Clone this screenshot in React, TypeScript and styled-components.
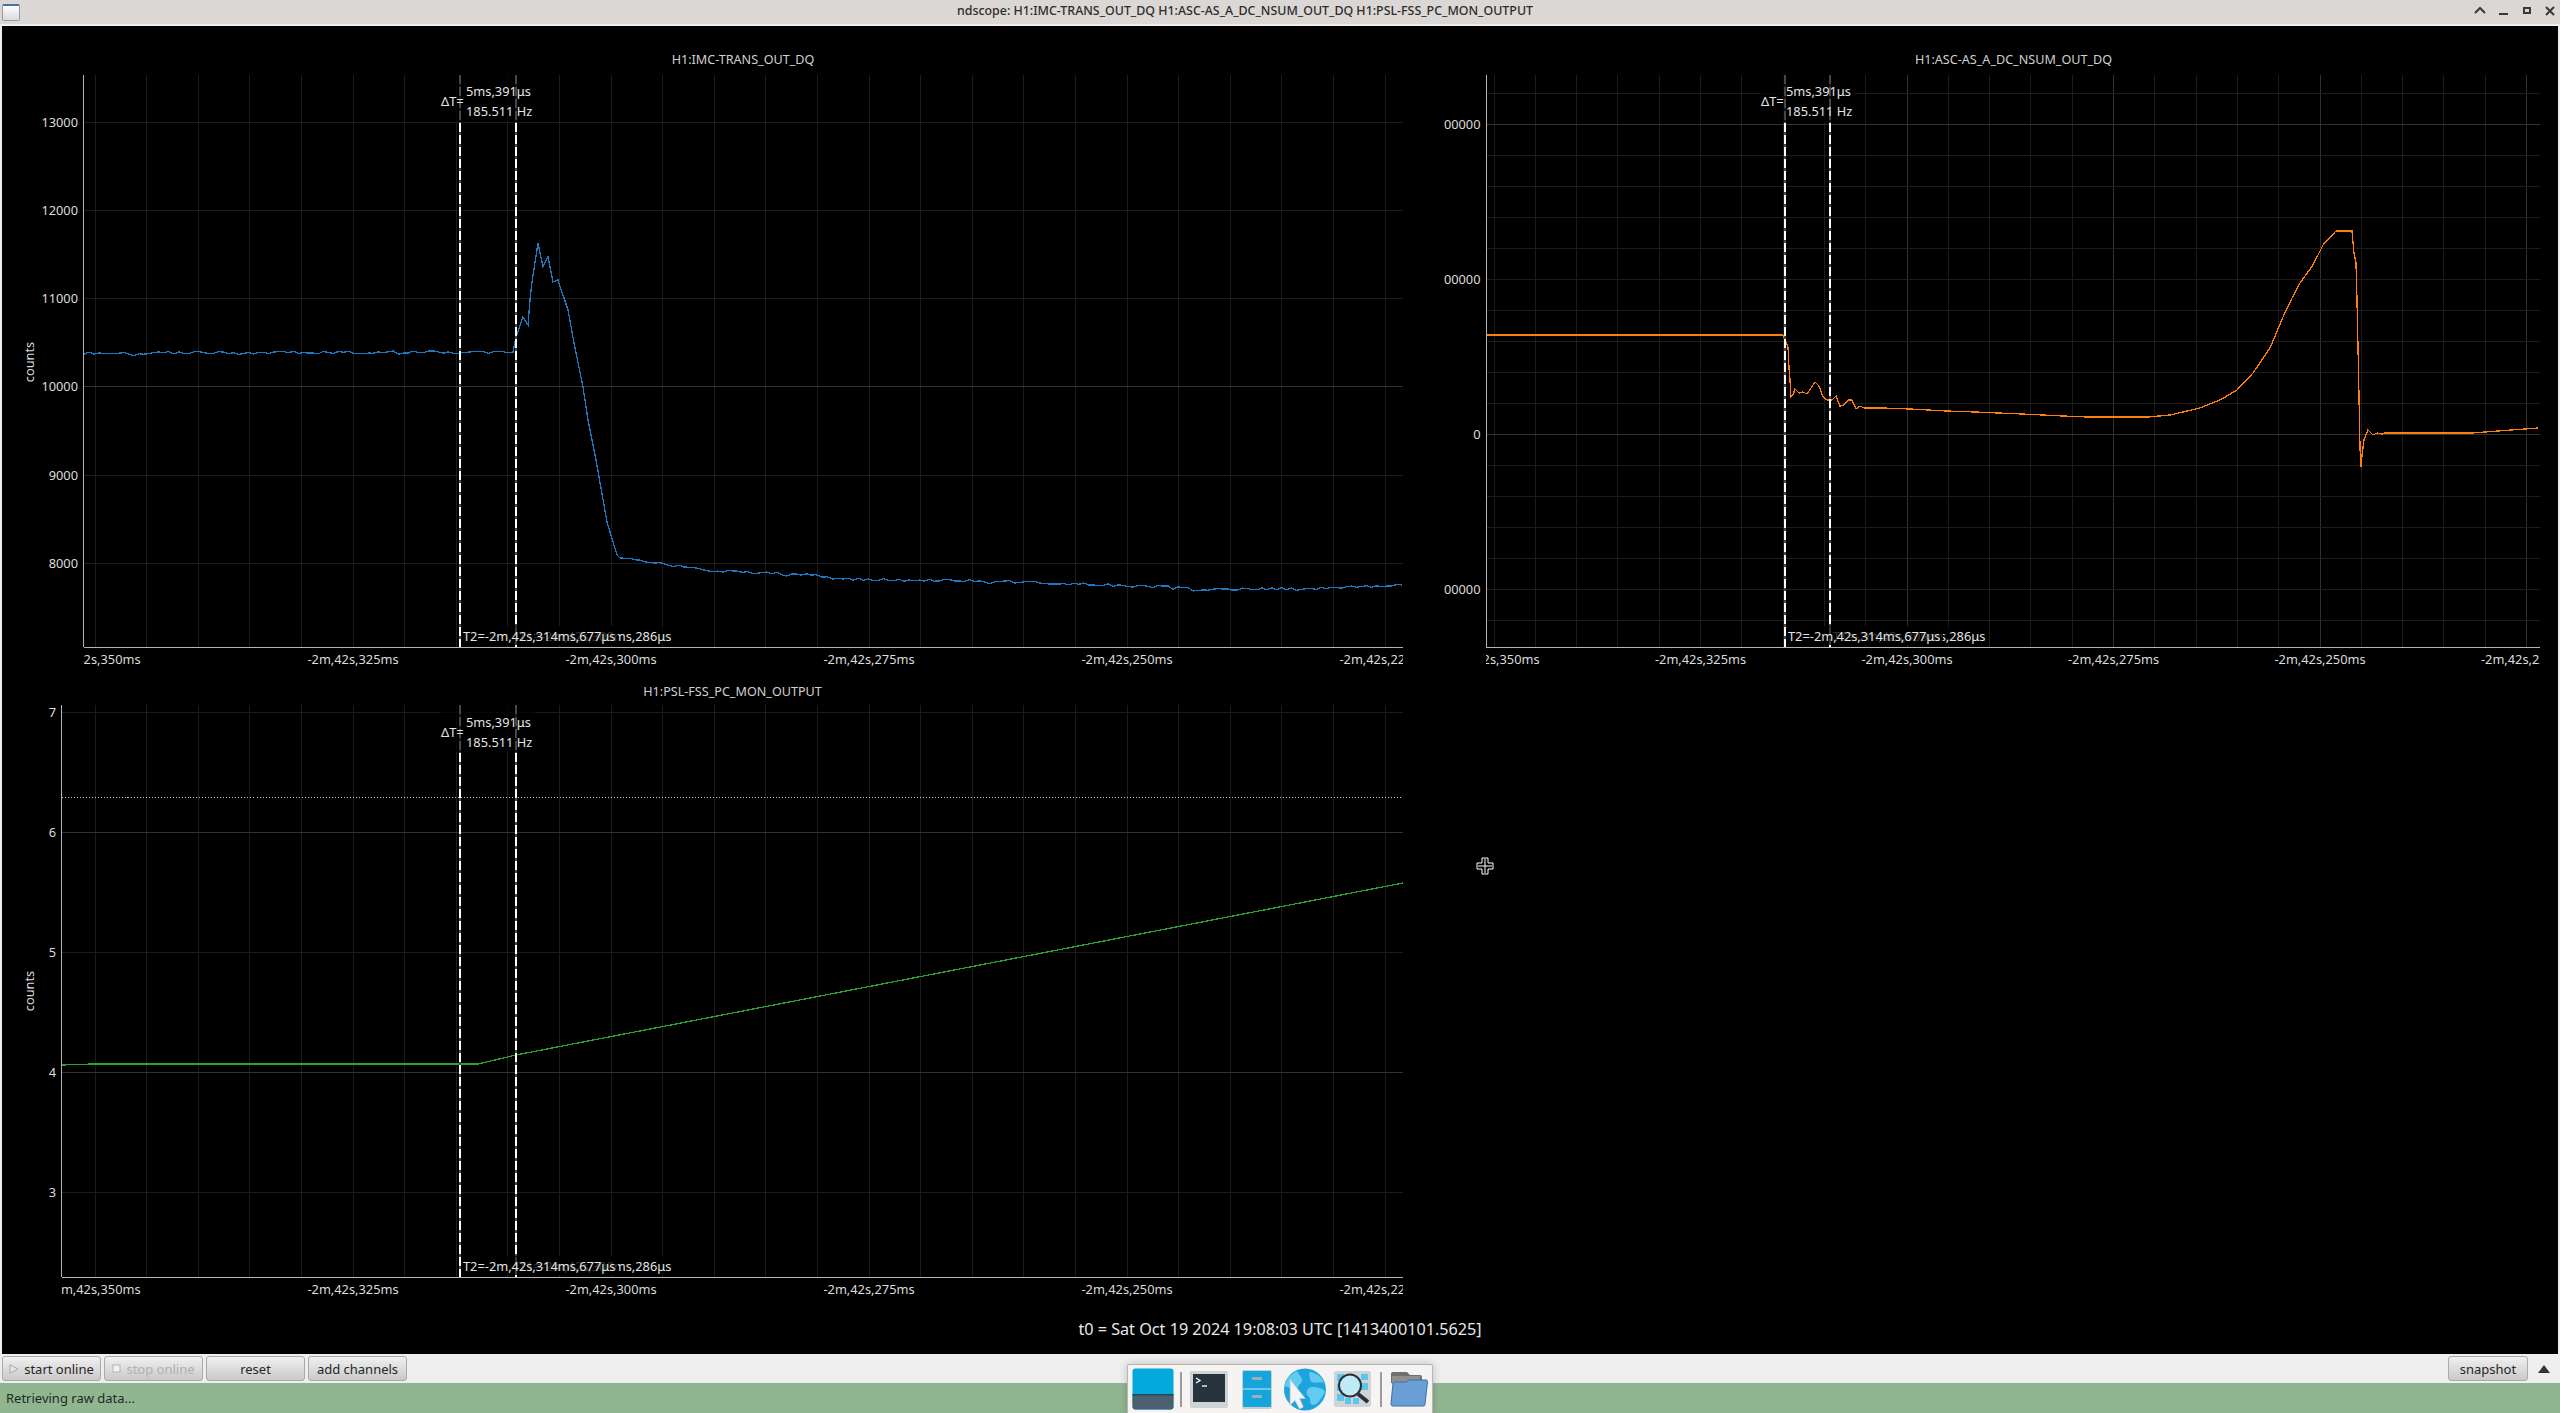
import React from 'react';
import styled, { createGlobalStyle } from 'styled-components';

const FONT = '"Noto Sans", "Open Sans", "DejaVu Sans", sans-serif';

const Global = createGlobalStyle`
  html, body { margin: 0; padding: 0; background: #eeeeee; }
  body { font-family: ${FONT}; }
`;

const Win = styled.div`
  position: relative;
  width: 2560px;
  height: 1413px;
  overflow: hidden;
  display: flex;
  flex-direction: column;
  background: #eeeeee;
`;

const TitleBar = styled.header`
  height: 24px;
  display: flex;
  align-items: center;
  background: #dad7d4;
  flex: none;
`;
const WinIcon = styled.div`
  width: 18px;
  height: 17px;
  margin-left: 2px;
  border: 1px solid #9a9a9a;
  border-top: 2px solid #4a6ea8;
  border-radius: 2px;
  box-sizing: border-box;
  background: linear-gradient(#fdfdfd, #d8dcdc);
`;
const WinTitle = styled.div`
  flex: 1;
  text-align: center;
  font-size: 12.4px;
  color: #2c2c2c;
  font-weight: 500;
  padding-bottom: 3px;
`;
const WinControls = styled.svg`
  width: 90px;
  height: 24px;
  flex: none;
`;

const Screen = styled.main`
  flex: none;
  height: 1328px;
  margin: 2px 2px 0;
  background: #000;
  display: flex;
  flex-direction: column;
`;
const PlotGrid = styled.div`
  display: grid;
  grid-template-columns: 1442px 1114px;
  grid-template-rows: 644px 630px;
`;
const Cell = styled.section`
  display: flex;
  flex-direction: column;
`;
const PlotTitle = styled.div<{ $h: number; $pad: number; $l: number; $r: number }>`
  height: ${(p) => p.$h}px;
  box-sizing: border-box;
  padding: ${(p) => p.$pad}px ${(p) => p.$r}px 0 ${(p) => p.$l}px;
  line-height: 20px;
  text-align: center;
  font-size: 12.6px;
  color: #d0d0d0;
`;
const ChartSvg = styled.svg`
  display: block;
  flex: none;
`;
const Tick = styled.text`
  font-family: ${FONT};
  font-size: 12.8px;
  fill: #dcdcdc;
`;
const CursorText = styled.text`
  font-family: ${FONT};
  font-size: 12.8px;
  fill: #e4e4e4;
`;
const Footer = styled.div`
  height: 54px;
  box-sizing: border-box;
  padding-top: 4px;
  display: flex;
  align-items: center;
  justify-content: center;
  font-size: 16.2px;
  color: #e8e8e8;
`;

const Toolbar = styled.div`
  height: 29px;
  flex: none;
  display: flex;
  align-items: center;
  gap: 3px;
  padding: 0 2px;
  background: #eeeeee;
`;
const Button = styled.button<{ $w?: number }>`
  width: ${(p) => p.$w ?? 99}px;
  height: 25px;
  padding: 0;
  display: flex;
  align-items: center;
  justify-content: center;
  gap: 5px;
  box-sizing: border-box;
  border: 1px solid #aaaaaa;
  border-radius: 3px;
  background: linear-gradient(#f0f0f0, #c9c9c9);
  font-family: ${FONT};
  font-size: 13px;
  color: ${(p) => (p.disabled ? '#b0b0b0' : '#262626')};
`;
const ToolSpacer = styled.div`
  flex: 1;
`;
const MoreArrow = styled.svg`
  width: 12px;
  height: 8px;
  margin: 0 8px 0 7px;
`;
const StatusBar = styled.footer`
  flex: 1;
  background: #90b690;
  display: flex;
  align-items: center;
  padding-left: 6px;
  font-size: 13px;
  color: #1f2a1f;
`;

const Dock = styled.nav`
  position: absolute;
  left: 1127px;
  top: 1364px;
  width: 306px;
  height: 52px;
  box-sizing: border-box;
  background: #f5f4f2;
  border: 1px solid #b7b5b0;
  border-radius: 2px;
  box-shadow: 0 0 8px rgba(0, 0, 0, 0.2);
  display: flex;
  align-items: flex-start;
  padding-left: 4px;
`;
const DockIcon = styled.svg<{ $ml: number; $mt: number }>`
  margin-left: ${(p) => p.$ml}px;
  margin-top: ${(p) => p.$mt}px;
  flex: none;
  display: block;
`;
const DockSep = styled.div<{ $ml: number }>`
  width: 2px;
  height: 35px;
  margin: 7px 0 0 ${(p) => p.$ml}px;
  background: #9b9b9b;
  flex: none;
`;
const MousePointer = styled.svg`
  position: absolute;
  left: 1476px;
  top: 857px;
  width: 18px;
  height: 18px;
`;

/* ---------- data ---------- */

type P = [number, number];

function rng(seed: number) {
  let s = seed;
  return () => {
    s = (s * 16807) % 2147483647;
    return (s % 10000) / 10000 - 0.5;
  };
}

function noisy(a: P[], step: number, amp: number, seed: number): string {
  const r = rng(seed);
  const out: string[] = [];
  for (let i = 0; i < a.length - 1; i++) {
    const [x0, y0] = a[i];
    const [x1, y1] = a[i + 1];
    const n = Math.max(1, Math.round((x1 - x0) / step));
    for (let k = 0; k < n; k++) {
      const t = k / n;
      let dy = r() * amp * 2;
      if (r() > 0.42) dy += 1.6 * Math.sign(amp);
      out.push(`${(x0 + (x1 - x0) * t).toFixed(1)},${(y0 + (y1 - y0) * t + dy).toFixed(1)}`);
    }
  }
  out.push(`${a[a.length - 1][0]},${a[a.length - 1][1]}`);
  return out.join(' ');
}

const exact = (a: P[]) => a.map((p) => p.join(',')).join(' ');

const trace1 =
  noisy([[84, 353], [513, 352]], 5, 1.4, 71) +
  ' ' +
  exact([
    [516, 337], [523, 317], [528, 325], [530, 300], [532, 282], [538, 243], [543, 267], [548, 257],
    [553, 282], [558, 280], [563, 295], [568, 310], [574, 343], [583, 387], [588, 420], [596, 460],
    [607, 522], [617, 555],
  ]) +
  ' ' +
  noisy([[620, 558], [718, 571], [816, 575], [833, 579], [980, 581], [1143, 586], [1208, 589], [1306, 589], [1402, 585]], 5, 1.3, 913);

const trace2 = exact([
  [1486, 335], [1783, 335], [1785, 340], [1788, 347], [1789, 368], [1790, 380], [1791, 397], [1793, 395],
  [1795, 389], [1799, 393], [1803, 392], [1807, 394], [1815, 382], [1819, 386], [1823, 397], [1827, 400],
  [1832, 400], [1836, 396], [1840, 406], [1844, 405], [1848, 400], [1852, 400], [1856, 409], [1860, 406],
  [1864, 408], [1883, 408], [1910, 409], [1947, 411], [1975, 412], [2022, 414], [2063, 416], [2087, 417],
  [2148, 417], [2170, 415], [2200, 408], [2220, 400], [2237, 390], [2253, 373], [2270, 348], [2283, 317],
  [2292, 298], [2300, 283], [2313, 265], [2323, 245], [2336, 231], [2352, 231], [2354, 253], [2356, 263],
  [2357, 300], [2358, 347], [2359, 397], [2360, 448], [2361, 467], [2362, 455], [2364, 440], [2368, 430],
  [2373, 435], [2377, 433], [2382, 434], [2385, 433], [2472, 433], [2498, 431], [2538, 428],
]);

const trace3 = exact([
  [62, 1065], [93, 1064], [478, 1064], [516, 1055], [1403, 883],
]);

interface PlotCfg {
  id: string;
  title: string;
  titleH: number;
  titlePad: number;
  titleL: number;
  titleR: number;
  originX: number;
  originY: number;
  width: number;
  height: number;
  axisX: number;
  right: number;
  top: number;
  bottom: number;
  yTicks: [number, string][];
  hGrid: number[];
  hStrong: number[];
  vStart: number;
  vStep: number;
  vStrong: boolean;
  xLabelStart: number;
  xLabelStep: number;
  cursors: [number, number];
  labelX: number;
  deltaX: number;
  labelOff: number;
  countsX: number;
  countsY: number;
  trace: string;
  color: string;
  dotted?: number;
}

const range = (a: number, step: number, b: number) => {
  const r: number[] = [];
  for (let v = a; v <= b; v += step) r.push(v);
  return r;
};

const plots: PlotCfg[] = [
  {
    id: 'a', title: 'H1:IMC-TRANS_OUT_DQ', titleH: 49, titlePad: 24, titleL: 81, titleR: 41,
    originX: 2, originY: 75, width: 1442, height: 595, axisX: 83.5, right: 1403, top: 75, bottom: 647,
    yTicks: [[122, '13000'], [210, '12000'], [298, '11000'], [386, '10000'], [475, '9000'], [563, '8000']],
    hGrid: [122, 210, 298, 386, 475, 563], hStrong: [386],
    vStart: 95, vStep: 51.6, vStrong: false, xLabelStart: 95, xLabelStep: 258,
    cursors: [460, 516], labelX: 466, deltaX: 441, labelOff: 16, countsX: 29, countsY: 362,
    trace: trace1, color: '#1f77c0',
  },
  {
    id: 'b', title: 'H1:ASC-AS_A_DC_NSUM_OUT_DQ', titleH: 49, titlePad: 24, titleL: 42, titleR: 17,
    originX: 1444, originY: 75, width: 1114, height: 595, axisX: 1486, right: 2540, top: 75, bottom: 647,
    yTicks: [[124, '200000'], [279, '100000'], [434, '0'], [589, '-100000']],
    hGrid: range(93, 31, 640), hStrong: [124, 434],
    vStart: 1494, vStep: 41.3, vStrong: true, xLabelStart: 1494, xLabelStep: 206.5,
    cursors: [1785, 1830], labelX: 1786, deltaX: 1761, labelOff: 16, countsX: 1419, countsY: 352,
    trace: trace2, color: '#ff7f0e',
  },
  {
    id: 'c', title: 'H1:PSL-FSS_PC_MON_OUTPUT', titleH: 35, titlePad: 12, titleL: 60, titleR: 41,
    originX: 2, originY: 705, width: 1442, height: 595, axisX: 61.5, right: 1403, top: 705, bottom: 1277,
    yTicks: [[712, '7'], [832, '6'], [952, '5'], [1072, '4'], [1192, '3']],
    hGrid: [712, 832, 952, 1072, 1192], hStrong: [832, 1072],
    vStart: 95, vStep: 51.6, vStrong: false, xLabelStart: 95, xLabelStep: 258,
    cursors: [460, 516], labelX: 466, deltaX: 441, labelOff: 17, countsX: 29, countsY: 991,
    trace: trace3, color: '#2ca02c', dotted: 797,
  },
];

const xLabels = ['-2m,42s,350ms', '-2m,42s,325ms', '-2m,42s,300ms', '-2m,42s,275ms', '-2m,42s,250ms', '-2m,42s,225ms'];

/* ---------- parts ---------- */

function Chart({ c }: { c: PlotCfg }) {
  const [c1, c2] = c.cursors;
  const vLines = range(c.vStart, c.vStep, c.right);
  return (
    <ChartSvg
      width={c.width}
      height={c.height}
      viewBox={`${c.originX} ${c.originY} ${c.width} ${c.height}`}
    >
      <defs>
        <clipPath id={`clip-${c.id}`}>
          <rect x={c.axisX} y={c.bottom} width={c.right - c.axisX} height={40} />
        </clipPath>
      </defs>
      {vLines.map((x, i) => (
        <line
          key={i}
          x1={x}
          x2={x}
          y1={c.top}
          y2={c.bottom}
          stroke={c.vStrong && i % 5 === 0 && i > 5 ? '#303030' : '#1c1c1c'}
          strokeWidth={1}
          shapeRendering="crispEdges"
        />
      ))}
      {c.hGrid.map((y) => (
        <line
          key={y}
          x1={c.axisX}
          x2={c.right}
          y1={y}
          y2={y}
          stroke={c.hStrong.includes(y) ? '#323232' : '#1c1c1c'}
          strokeWidth={1}
          shapeRendering="crispEdges"
        />
      ))}
      {c.dotted && (
        <line x1={c.axisX} x2={c.right} y1={c.dotted} y2={c.dotted} stroke="#c8c8c8" strokeWidth={1} strokeDasharray="1 2" shapeRendering="crispEdges" />
      )}
      <polyline points={c.trace} fill="none" stroke={c.color} strokeWidth={1.3} shapeRendering="crispEdges" />
      {[c1, c2].map((x) => (
        <g key={x}>
          <line x1={x} x2={x} y1={c.top} y2={c.bottom} stroke="#4a4a4a" strokeWidth={2} shapeRendering="crispEdges" />
          <line x1={x} x2={x} y1={c.top} y2={c.bottom} stroke="#ffffff" strokeWidth={2} strokeDasharray="9 3" shapeRendering="crispEdges" />
        </g>
      ))}
      {/* delta label */}
      <rect x={c.deltaX - 1} y={c.top} width={c.labelX + 70 - c.deltaX} height={47} fill="rgba(0,0,0,0.72)" />
      <CursorText x={c.deltaX} y={c.top + c.labelOff + 10} dominantBaseline="central">ΔT=</CursorText>
      <CursorText x={c.labelX} y={c.top + c.labelOff} dominantBaseline="central">5ms,391μs</CursorText>
      <CursorText x={c.labelX} y={c.top + c.labelOff + 20} dominantBaseline="central">185.511 Hz</CursorText>
      {/* time labels */}
      <rect x={c2 + 2} y={c.bottom - 21} width={156} height={19} fill="rgba(0,0,0,0.72)" />
      <CursorText x={c2 + 3} y={c.bottom - 11} dominantBaseline="central">T1=-2m,42s,309ms,286μs</CursorText>
      <rect x={c1 + 2} y={c.bottom - 21} width={156} height={19} fill="rgba(0,0,0,0.78)" />
      <CursorText x={c1 + 3} y={c.bottom - 11} dominantBaseline="central">T2=-2m,42s,314ms,677μs</CursorText>
      {/* axes */}
      <line x1={c.axisX} x2={c.axisX} y1={c.top} y2={c.bottom} stroke="#b4b4b4" shapeRendering="crispEdges" />
      <line x1={c.axisX} x2={c.right} y1={c.bottom} y2={c.bottom} stroke="#b4b4b4" shapeRendering="crispEdges" />
      {c.yTicks.map(([y, t]) => (
        <Tick key={t} x={c.axisX - 5.5} y={y} textAnchor="end" dominantBaseline="central">{t}</Tick>
      ))}
      <g clipPath={`url(#clip-${c.id})`}>
        {xLabels.map((t, i) => (
          <Tick key={t} x={c.xLabelStart + i * c.xLabelStep} y={c.bottom + 12} textAnchor="middle" dominantBaseline="central">{t}</Tick>
        ))}
      </g>
      <Tick
        x={c.countsX}
        y={c.countsY}
        textAnchor="middle"
        dominantBaseline="central"
        transform={`rotate(-90 ${c.countsX} ${c.countsY})`}
      >
        counts
      </Tick>
    </ChartSvg>
  );
}

function Plot({ c }: { c: PlotCfg }) {
  return (
    <Cell>
      <PlotTitle $h={c.titleH} $pad={c.titlePad} $l={c.titleL} $r={c.titleR}>{c.title}</PlotTitle>
      <Chart c={c} />
    </Cell>
  );
}

const Controls = () => (
  <WinControls viewBox="2470 0 90 24">
    <g fill="none" stroke="#333a40" strokeWidth={2}>
      <path d="M2475 13l5-5 5 5" />
      <path d="M2499 14h9" />
      <rect x={2524} y={8} width={6} height={5} />
      <path d="M2546 7l8 8M2554 7l-8 8" />
    </g>
  </WinControls>
);

export default function App() {
  return (
    <Win>
      <Global />
      <TitleBar>
        <WinIcon />
        <WinTitle>ndscope: H1:IMC-TRANS_OUT_DQ H1:ASC-AS_A_DC_NSUM_OUT_DQ H1:PSL-FSS_PC_MON_OUTPUT</WinTitle>
        <Controls />
      </TitleBar>
      <Screen>
        <PlotGrid>
          <Plot c={plots[0]} />
          <Plot c={plots[1]} />
          <Plot c={plots[2]} />
          <Cell />
        </PlotGrid>
        <Footer>t0 = Sat Oct 19 2024 19:08:03 UTC [1413400101.5625]</Footer>
      </Screen>
      <Toolbar>
        <Button>
          <svg width="10" height="10" viewBox="0 0 10 10">
            <path d="M1 .8L9 5 1 9.2z" fill="#e6e6e6" stroke="#a8a8a8" strokeWidth="1" />
          </svg>
          start online
        </Button>
        <Button disabled>
          <svg width="9" height="9" viewBox="0 0 9 9">
            <rect x="1" y="1" width="7" height="7" fill="#f2f2f2" stroke="#b4b4b4" />
          </svg>
          stop online
        </Button>
        <Button>reset</Button>
        <Button>add channels</Button>
        <ToolSpacer />
        <Button $w={80}>snapshot</Button>
        <MoreArrow viewBox="0 0 12 8">
          <path d="M6 0l6 8H0z" fill="#333333" />
        </MoreArrow>
      </Toolbar>
      <StatusBar>Retrieving raw data...</StatusBar>
      <Dock>
        <DockIcon $ml={0} $mt={3} width="42" height="42" viewBox="0 0 42 42">
          <rect x="0.5" y="0.5" width="41" height="41" rx="3" fill="#01a9dd" />
          <path d="M.5 27h41v11.500a3 3 0 0 1-3 3h-35a3 3 0 0 1-3-3z" fill="#4b6070" />
          <rect x="0.5" y="26" width="41" height="1.500" fill="#2a4555" />
        </DockIcon>
        <DockSep $ml={6} />
        <DockIcon $ml={8} $mt={6} width="38" height="37" viewBox="0 0 38 37">
          <rect x="0" y="0" width="38" height="37" rx="2" fill="#ced3d6" />
          <rect x="3" y="3" width="32" height="28" fill="#27343e" />
          <path d="M6 7l4 2.500-4 2.500" fill="none" stroke="#fff" strokeWidth="1.300" />
          <path d="M12 15h5" stroke="#fff" strokeWidth="1.300" />
        </DockIcon>
        <DockIcon $ml={14} $mt={5} width="30" height="39" viewBox="0 0 30 39">
          <rect x="0" y="0" width="30" height="39" rx="2" fill="#c8cdd0" />
          <rect x="1" y="1" width="28" height="36" rx="1" fill="#14a5dc" />
          <rect x="1" y="18.500" width="28" height="1" fill="#cfe8f2" />
          <rect x="10" y="7" width="10" height="3" rx="1" fill="#9bb0ba" />
          <rect x="10" y="25" width="10" height="3" rx="1" fill="#9bb0ba" />
        </DockIcon>
        <DockIcon $ml={11} $mt={3} width="44" height="43" viewBox="0 0 44 43">
          <circle cx="22" cy="21.500" r="21" fill="#1fa3dc" />
          <path d="M14 3c-6 3-11 8-12 15 3 2 5 1 7 3s5 1 6-2 3-3 4-6-3-6-5-10z" fill="#63cbf0" />
          <path d="M26 4c1 4 0 8 3 10s7-1 12 1c-2-6-8-11-15-11zM25 21c3-3 9-2 14 0s2 5 0 8-5 8-9 8-2-6-4-8-4-5-1-8z" fill="#63cbf0" />
          <path d="M18 10l0 27 5-5 5 9 4-2-4-9h6z" transform="translate(-10 2) scale(.95)" fill="#f2f4f5" stroke="#c0c6ca" strokeWidth=".8" />
        </DockIcon>
        <DockIcon $ml={7} $mt={6} width="38" height="37" viewBox="0 0 38 37">
          <rect x="0" y="0" width="37" height="36" rx="2" fill="#d0d4d6" />
          <g fill="#5cc6ec">
            <rect x="3" y="3" width="7" height="7" />
            <rect x="3" y="13" width="7" height="7" />
            <rect x="3" y="23" width="7" height="7" />
            <rect x="27" y="3" width="7" height="6" />
            <rect x="27" y="12" width="7" height="7" />
            <rect x="11" y="27" width="6" height="6" />
            <rect x="19" y="27" width="6" height="6" />
          </g>
          <circle cx="16" cy="14.500" r="11" fill="#bfeaf6" stroke="#2a3238" strokeWidth="2" />
          <path d="M24 23l10 8" stroke="#2a3238" strokeWidth="4" />
        </DockIcon>
        <DockSep $ml={8} />
        <DockIcon $ml={8} $mt={5} width="38" height="38" viewBox="0 0 38 38">
          <path d="M1 4a2 2 0 0 1 2-2h14l3 3h10a2 2 0 0 1 2 2v6H1z" fill="#6f6f6f" />
          <rect x="2" y="6" width="28" height="8" fill="#8f8f8f" />
          <path d="M3 36a2 2 0 0 1-2-2l2-21a2 2 0 0 1 2-1l11 0 3-2h17a1.500 1.500 0 0 1 1.500 2L35 34a2 2 0 0 1-2 2z" fill="#6a9fd6" stroke="#3d6ea6" strokeWidth="1" />
        </DockIcon>
      </Dock>
      <MousePointer viewBox="0 0 18 18">
        <path d="M6 1h6v5h5v6h-5v5H6v-5H1V6h5z" fill="#000" stroke="#fff" strokeWidth="1" />
        <path d="M9 2v14M2 9h14" stroke="#fff" strokeWidth="1" />
      </MousePointer>
    </Win>
  );
}
